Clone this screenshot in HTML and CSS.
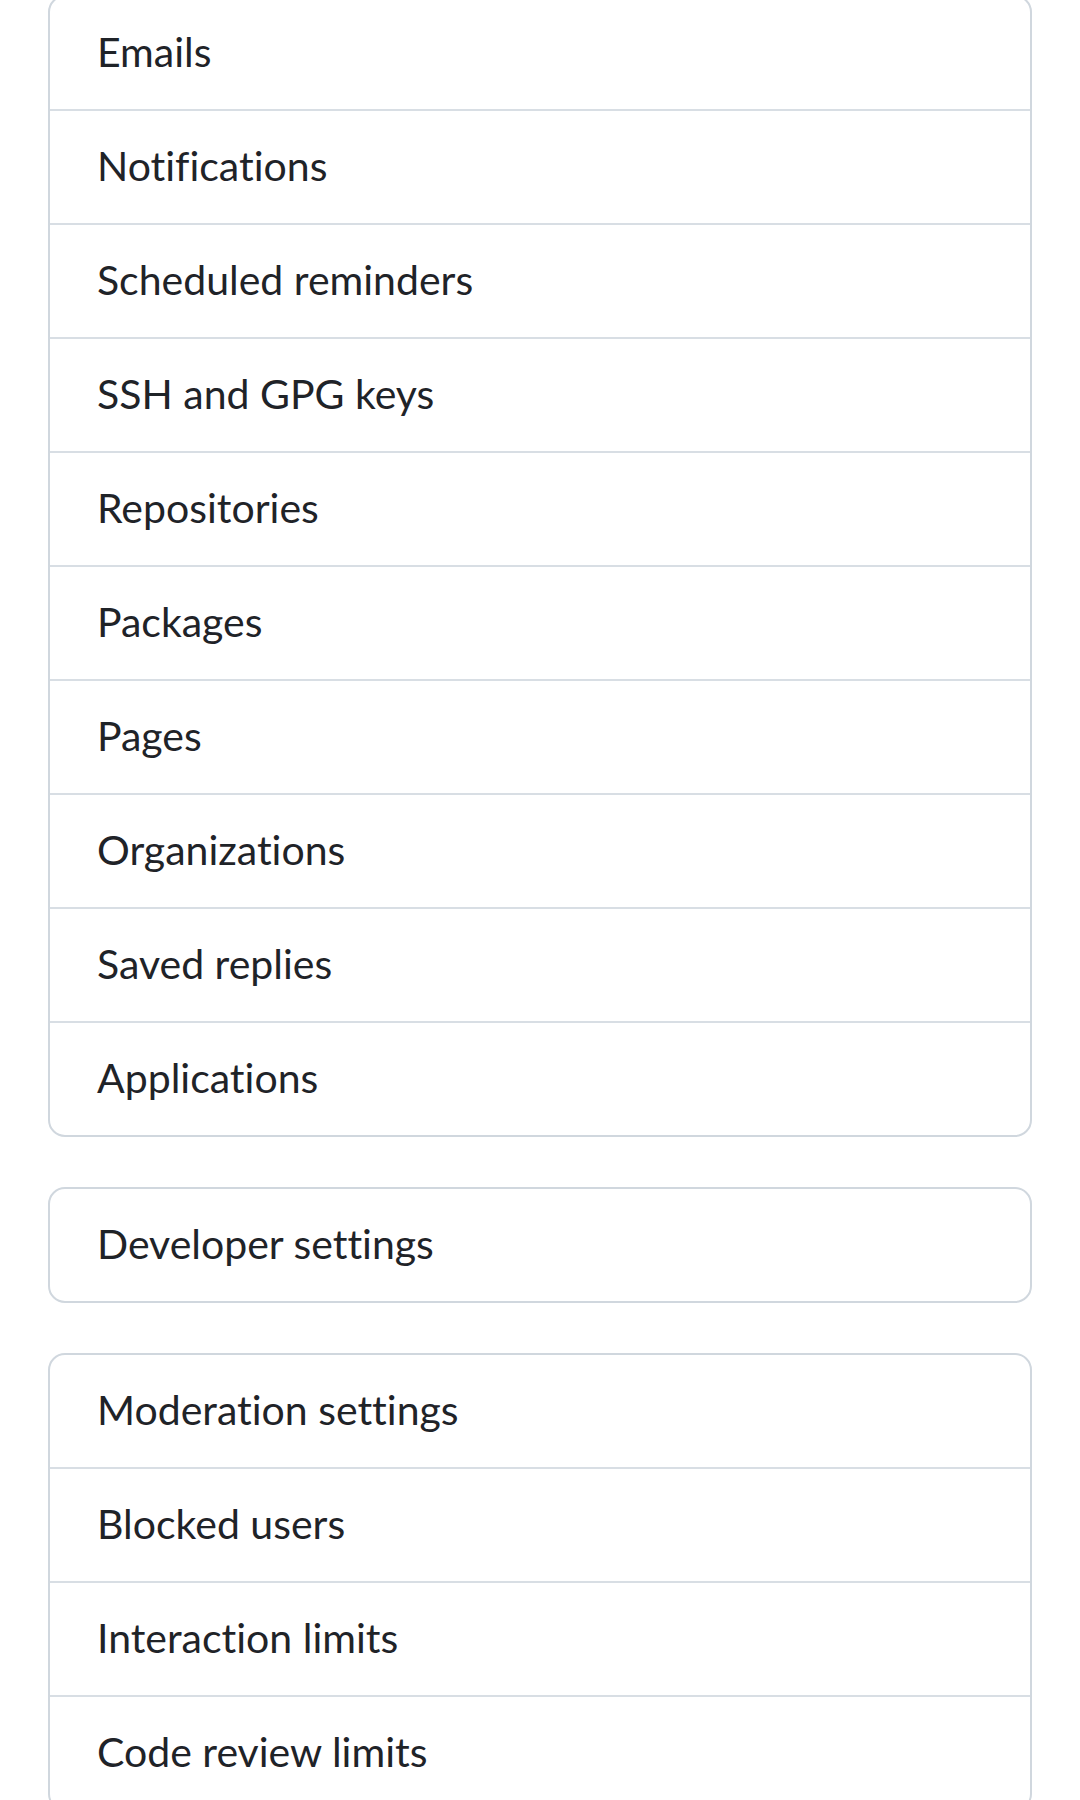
FILE: index.html
```html
<!DOCTYPE html>
<html lang="en">
<head>
<meta charset="utf-8">
<title>Settings</title>
<link rel="stylesheet" href="styles.css">
</head>
<body>
<main class="page">
  <nav class="menu">
    <a class="menu-item" href="#">Emails</a>
    <a class="menu-item" href="#">Notifications</a>
    <a class="menu-item" href="#">Scheduled reminders</a>
    <a class="menu-item" href="#">SSH and GPG keys</a>
    <a class="menu-item" href="#">Repositories</a>
    <a class="menu-item" href="#">Packages</a>
    <a class="menu-item" href="#">Pages</a>
    <a class="menu-item" href="#">Organizations</a>
    <a class="menu-item" href="#">Saved replies</a>
    <a class="menu-item" href="#">Applications</a>
  </nav>
  <nav class="menu">
    <a class="menu-item" href="#">Developer settings</a>
  </nav>
  <nav class="menu">
    <a class="menu-item" href="#">Moderation settings</a>
    <a class="menu-item" href="#">Blocked users</a>
    <a class="menu-item" href="#">Interaction limits</a>
    <a class="menu-item" href="#">Code review limits</a>
  </nav>
</main>
</body>
</html>
```
FILE: styles.css
```css
html, body {
  margin: 0;
  padding: 0;
  background: #ffffff;
}

body {
  font-family: "Lato", "Liberation Sans", sans-serif;
  color: #1f2328;
  overflow: hidden;
}

.page {
  display: flex;
  flex-direction: column;
  gap: 50px;
  margin: -5px 48px 0;
}

.menu {
  display: flex;
  flex-direction: column;
  border: 2px solid #d0d7de;
  border-radius: 17px;
  overflow: hidden;
  background: #ffffff;
}

.menu-item {
  display: flex;
  align-items: center;
  height: 108px;
  padding: 0 47px 4px;
  font-size: 41px;
  font-variant-ligatures: none;
  color: #1f2328;
  text-decoration: none;
}

.menu-item + .menu-item {
  border-top: 2px solid #d8dee4;
}
```
